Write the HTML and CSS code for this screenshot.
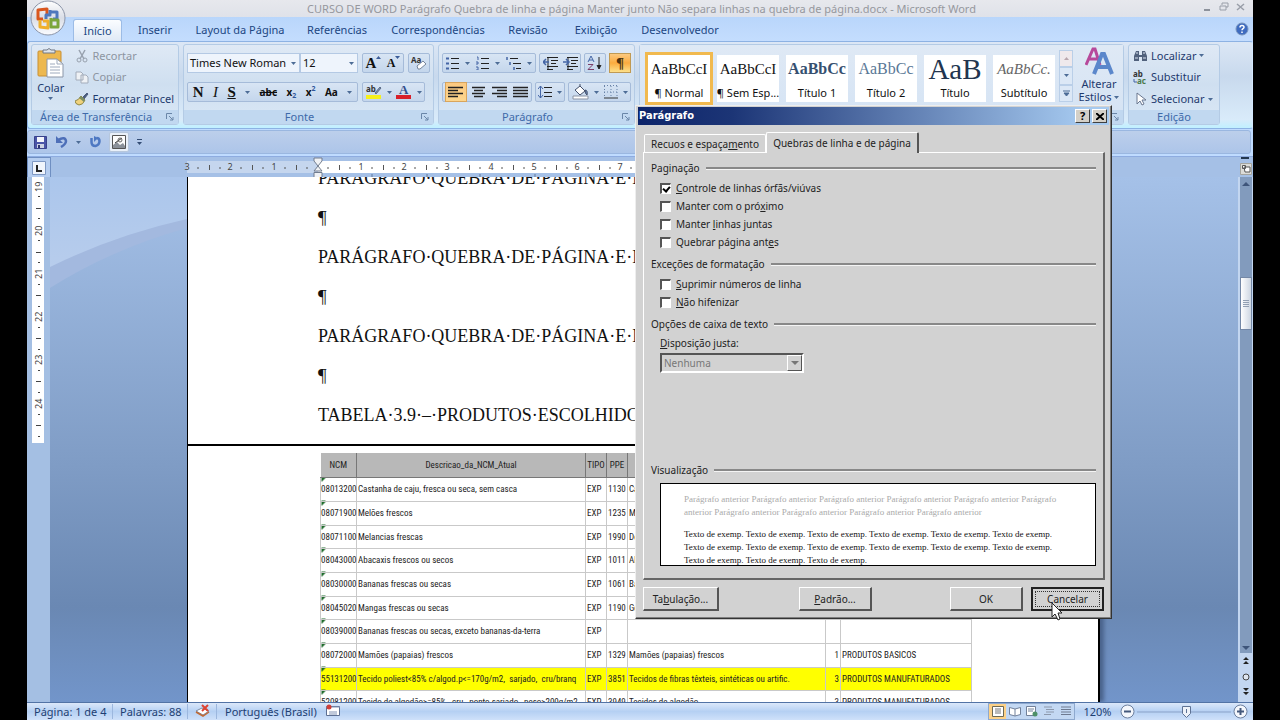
FILE: index.html
```html
<!DOCTYPE html>
<html lang="pt-BR">
<head>
<meta charset="utf-8">
<title>Microsoft Word</title>
<link rel="stylesheet" href="styles.css">
</head>
<body>
<svg class="defs" width="0" height="0" aria-hidden="true">
  <symbol id="launch" viewBox="0 0 8 8"><path d="M0.500 6V.5H6M3 3l4 4M7 4v3H4" fill="none" stroke="#6a86a8"/></symbol>
  <symbol id="caret" viewBox="0 0 5 3"><path d="M0 0h5L2.500 3z" fill="#4d6c96"/></symbol>
</svg>
<div class="app">
  <header class="titlebar">
    <h1 class="title">CURSO DE WORD Parágrafo Quebra de linha e página Manter junto Não separa linhas na quebra de página.docx - Microsoft Word</h1>
    <div class="winbtns">
      <button aria-label="Minimizar"><svg width="10" height="10"><path d="M2 8h6" stroke="#8d929c" stroke-width="2"/></svg></button>
      <button aria-label="Restaurar"><svg width="10" height="10"><path d="M3 3V1h6v4H7M1 4h6v4H1z" stroke="#999ea8" fill="none"/></svg></button>
      <button aria-label="Fechar"><svg width="10" height="10"><path d="M1 2l7 6M8 2L1 8" stroke="#999ea8" stroke-width="1.500"/></svg></button>
    </div>
  </header>
  <button class="orb" aria-label="Botão Office">
    <svg viewBox="0 0 36 36" width="36" height="36">
      <defs><linearGradient id="orbg" x1="0" y1="0" x2="0" y2="1"><stop offset="0" stop-color="#fff"/><stop offset=".5" stop-color="#d9dde6"/><stop offset="1" stop-color="#fbfcff"/></linearGradient></defs>
      <circle cx="18" cy="18" r="17" fill="url(#orbg)" stroke="#8c95a8"/>
      <g fill="none" stroke-width="3" stroke-linejoin="round">
        <path d="M17 15V9L8 10v9h5" stroke="#d9571f"/>
        <path d="M20 10v5h-4v4M20 12h7v7h-4" stroke="#4f78bd"/>
        <path d="M10 20v7l8 1v-7h-5" stroke="#efb02c"/>
        <path d="M21 18v9h7v-7h-6" stroke="#7ba63c"/>
      </g>
    </svg>
  </button>
  <nav class="tabs">
    <button class="tab on">Início</button><button class="tab t2">Inserir</button><button class="tab t3">Layout da Página</button><button class="tab t4">Referências</button><button class="tab t5">Correspondências</button><button class="tab t6">Revisão</button><button class="tab t7">Exibição</button><button class="tab t8">Desenvolvedor</button>
    <button class="help" aria-label="Ajuda"><svg width="14" height="14"><circle cx="7" cy="7" r="6" fill="#3f6cc0" stroke="#7894bd"/><path d="M5 5.500c0-2.600 4-2.600 4-.3 0 1.500-2 1.400-2 3M7 9.500v1.500" stroke="#fff" stroke-width="1.500" fill="none"/></svg></button>
  </nav>

  <div class="ribbon">
    <section class="group g-clip">
      <div class="body clip">
        <button class="big">
          <svg width="27" height="30" viewBox="0 0 27 30"><rect x="1" y="3" width="23" height="25" rx="1" fill="#edb84f" stroke="#c98f32"/><path d="M6 5V2h4q2-3 4 0h4v3z" fill="#dfe4ea" stroke="#6e7785"/><path d="M10 11h10l6 5v13H10z" fill="#fff" stroke="#8b96a8"/><path d="M20 11v5h6M13 16h5M13 19h10M13 22h10M13 25h10" stroke="#9eaabd" fill="none"/></svg>
          <span>Colar</span><svg width="5" height="3"><use href="#caret"/></svg>
        </button>
        <div class="list">
          <button class="row dim"><svg width="14" height="14"><path d="M4 1l5 9M10 1L5 10" stroke="#98a1ae" stroke-width="1.500"/><circle cx="4" cy="11" r="2" fill="none" stroke="#98a1ae"/><circle cx="10" cy="11" r="2" fill="none" stroke="#98a1ae"/></svg>Recortar</button>
          <button class="row dim"><svg width="14" height="14"><path d="M1 2h5l2 2v6H1zM6 5h5l2 2v6H6z" fill="#eef1f5" stroke="#a3acba"/></svg>Copiar</button>
          <button class="row"><svg width="14" height="14"><path d="M8 5l4-4 1 1-4 5z" fill="#4b5c7d" stroke="#4b5c7d"/><path d="M6 4l4 4q-2 5-6 5-4-1-4-4 4-1 6-5z" fill="#f0d27c" stroke="#8f8745"/><path d="M6 4l4 4-1 2-5-4z" fill="#7c8f64"/></svg>Formatar Pincel</button>
        </div>
      </div>
      <h2 class="label">Área de Transferência</h2><svg class="launch" width="8" height="8"><use href="#launch"/></svg>
    </section>

    <section class="group g-font">
      <div class="body lines">
        <div class="line">
          <button class="combo fontname">Times New Roman<svg width="5" height="3"><use href="#caret"/></svg></button><button class="combo fontsize">12<svg width="5" height="3"><use href="#caret"/></svg></button>
          <div class="bar grow"><button class="serif">A<svg class="tri" width="5" height="3"><path d="M0 3h5L2.500 0z" fill="#3a5b98"/></svg></button><button class="serif sm">A<svg class="tri" width="5" height="3"><path d="M0 0h5L2.500 3z" fill="#3a5b98"/></svg></button></div>
          <div class="bar"><button aria-label="Limpar formatação"><svg width="18" height="16"><text x="1" y="8" class="tiny">Aa</text><path d="M7 11l6-5 3 3-6 5H8z" fill="#fff" stroke="#77859a"/></svg></button></div>
        </div>
        <div class="line">
          <div class="bar styles"><button class="serif"><b>N</b></button><button class="serif"><i>I</i></button><button class="serif"><b><u>S</u></b></button><svg width="5" height="3"><use href="#caret"/></svg><button class="strike">abc</button><button class="x">x<sub>2</sub></button><button class="x">x<sup>2</sup></button><button class="x">Aa</button><svg width="5" height="3"><use href="#caret"/></svg></div>
          <div class="bar colors"><button aria-label="Realce"><svg width="18" height="16"><text x="1" y="8" class="tiny">ab</text><path d="M10 9l5-6 1 1-5 6z" fill="#7c8fae" stroke="#5c6d88"/><path d="M1 11h15v4H1z" fill="#f6f01b"/></svg></button><svg width="5" height="3"><use href="#caret"/></svg><button aria-label="Cor da fonte"><svg width="18" height="16"><text x="4" y="10" class="biga">A</text><path d="M1 11h15v4H1z" fill="#d8202a"/></svg></button><svg width="5" height="3"><use href="#caret"/></svg></div>
        </div>
      </div>
      <h2 class="label">Fonte</h2><svg class="launch" width="8" height="8"><use href="#launch"/></svg>
    </section>

    <section class="group g-para">
      <div class="body lines">
        <div class="line">
          <div class="bar lists">
            <button aria-label="Marcadores"><svg width="14" height="14"><path d="M5 2.500h8M5 7.500h8M5 12.500h8" stroke="#222"/><path d="M0 2.500h3M0 7.500h3M0 12.500h3" stroke="#4465a5" stroke-width="2"/></svg></button><svg width="5" height="3"><use href="#caret"/></svg>
            <button aria-label="Numeração"><svg width="14" height="14"><path d="M5 2.500h8M5 7.500h8M5 12.500h8" stroke="#222"/><path d="M1 1h1v3M0 6h2v2H0M0 11h2v3H0" fill="none" stroke="#4465a5"/></svg></button><svg width="5" height="3"><use href="#caret"/></svg>
            <button aria-label="Vários níveis"><svg width="16" height="14"><path d="M4 2.500h8M7 7.500h8M10 12.500h5" stroke="#222"/><path d="M1 1v3M4 6v3M8 11v3" stroke="#4465a5" stroke-width="1.500"/></svg></button><svg width="5" height="3"><use href="#caret"/></svg>
          </div>
          <div class="bar two">
            <button aria-label="Diminuir recuo"><svg width="15" height="14"><path d="M4 1.500h11M8 4.500h7M8 7.500h5M4 10.500h11M4 13.500h6M5 1v13" stroke="#222"/><path d="M0 6h6M3 3L0 6l3 3" stroke="#4465a5" stroke-width="1.500" fill="none"/></svg></button>
            <button aria-label="Aumentar recuo"><svg width="15" height="14"><path d="M4 1.500h11M8 4.500h7M8 7.500h5M4 10.500h11M4 13.500h6M5 1v13" stroke="#222"/><path d="M0 6h6M3 3l3 3-3 3" stroke="#4465a5" stroke-width="1.500" fill="none"/></svg></button>
          </div>
          <div class="bar"><button aria-label="Classificar"><svg width="16" height="16"><path d="M1 7l3-6 3 6M2 5h4" stroke="#4465a5" fill="none"/><path d="M1 9.500h5l-5 5h6" stroke="#7c3f68" fill="none"/><path d="M12 2v11M10 10l2 4 2-4" stroke="#222" fill="#222"/></svg></button></div>
          <button class="pil">¶</button>
        </div>
        <div class="line">
          <div class="bar align">
            <button class="sel" aria-label="Esquerda"><svg width="15" height="13"><path d="M0 1.500h15M0 4.500h10M0 7.500h15M0 10.500h10" stroke="#222" stroke-width="1.500"/></svg></button>
            <button aria-label="Centro"><svg width="15" height="13"><path d="M1 1.500h13M3 4.500h9M1 7.500h13M3 10.500h9" stroke="#222" stroke-width="1.500"/></svg></button>
            <button aria-label="Direita"><svg width="15" height="13"><path d="M0 1.500h15M5 4.500h10M0 7.500h15M5 10.500h10" stroke="#222" stroke-width="1.500"/></svg></button>
            <button aria-label="Justificar"><svg width="15" height="13"><path d="M0 1.500h15M0 4.500h15M0 7.500h15M0 10.500h15" stroke="#222" stroke-width="1.500"/></svg></button>
          </div>
          <div class="bar spacing"><button aria-label="Espaçamento"><svg width="15" height="14"><path d="M6 2.500h8M6 7.500h8M6 11.500h8" stroke="#222"/><path d="M2.500 1v12M0 4l2.500-3L5 4M0 10l2.500 3L5 10" stroke="#4465a5" fill="none"/></svg></button><svg width="5" height="3"><use href="#caret"/></svg></div>
          <div class="bar colors">
            <button aria-label="Sombreamento"><svg width="17" height="16"><path d="M3 6l5-4 5 5-5 4z" fill="#fff" stroke="#44506a"/><path d="M8 2V0M13 6q3 0 2 5-2-1-2-5" stroke="#44506a" fill="#6b85b5"/><path d="M1 12h15v3H1z" fill="#fff" stroke="#8a93a3"/></svg></button><svg width="5" height="3"><use href="#caret"/></svg>
            <button aria-label="Bordas"><svg width="14" height="14"><path d="M.5 1v12M7 1v12M13 1v12M0 .5h14M0 7h14" stroke="#6982a7" stroke-dasharray="1 2"/><path d="M0 13h14" stroke="#333"/></svg></button><svg width="5" height="3"><use href="#caret"/></svg>
          </div>
        </div>
      </div>
      <h2 class="label">Parágrafo</h2><svg class="launch" width="8" height="8"><use href="#launch"/></svg>
    </section>

    <section class="group g-style">
      <div class="body gallery">
        <button class="style cur"><span class="smp">AaBbCcI</span><span>¶ Normal</span></button>
        <button class="style"><span class="smp">AaBbCcI</span><span>¶ Sem Esp...</span></button>
        <button class="style"><span class="smp h1s">AaBbCc</span><span>Título 1</span></button>
        <button class="style"><span class="smp h2s">AaBbCc</span><span>Título 2</span></button>
        <button class="style"><span class="smp tts">AaB</span><span>Título</span></button>
        <button class="style"><span class="smp sts">AaBbCc.</span><span>Subtítulo</span></button>
        <div class="gscroll"><button aria-label="Acima" class="up"><svg width="5" height="3"><path d="M0 3h5L2.500 0z" fill="#b9a7ae"/></svg></button><button aria-label="Abaixo"><svg width="5" height="3"><use href="#caret"/></svg></button><button aria-label="Mais"><svg width="7" height="7"><path d="M0 1h7M1 3h5L3.500 6z" fill="#4d6c96" stroke="#4d6c96"/></svg></button></div>
        <button class="big alt">
          <svg width="29" height="30" viewBox="0 0 29 30"><path d="M1 18L8 2h2l5 16M4 12h9" stroke="#b7499b" stroke-width="3" fill="none"/><path d="M9 27l8-20h2l8 20M12 20h12" stroke="#5b87cb" stroke-width="4" fill="none"/></svg>
          <span>Alterar</span><span>Estilos <svg width="5" height="3"><use href="#caret"/></svg></span>
        </button>
      </div>
      <div class="label"></div><svg class="launch" width="8" height="8"><use href="#launch"/></svg>
    </section>

    <section class="group g-edit">
      <div class="body list">
        <button class="row"><svg width="15" height="13"><path d="M1 12V7l2-5h3v4h3V2h3l2 5v5H9V8H6v4z" fill="#51617c"/><path d="M2 9h3M10 9h3M3 4h2M10 4h2" stroke="#dce5f2"/></svg>Localizar<svg width="5" height="3"><use href="#caret"/></svg></button>
        <button class="row"><svg width="15" height="14"><text x="0" y="7" class="tiny">ab</text><text x="4" y="14" class="tiny grn">ac</text><path d="M1 9v3h3" stroke="#4465a5" fill="none"/></svg>Substituir</button>
        <button class="row"><svg width="15" height="14"><path d="M4 1v11l3-3 2 4 2-1-2-4h4z" fill="#fff" stroke="#6b7890"/></svg>Selecionar<svg width="5" height="3"><use href="#caret"/></svg></button>
      </div>
      <h2 class="label">Edição</h2>
    </section>
  </div>

  <div class="qat">
    <button aria-label="Salvar"><svg width="13" height="13"><path d="M.5.5h12v12H.5z" fill="#4a55a8" stroke="#39428c"/><path d="M3 1h7v5H3z" fill="#f3f5fb"/><path d="M3 8h7v4H3z" fill="#cdd3e4"/><path d="M4 9h2v3H4z" fill="#2d3572"/></svg></button>
    <button aria-label="Desfazer"><svg width="13" height="12"><path d="M3 4q7-4 8 1 0 3-5 6" stroke="#4e6fb8" stroke-width="2.500" fill="none"/><path d="M1 0v7h7z" fill="#4e6fb8"/></svg></button>
    <svg width="5" height="3"><use href="#caret"/></svg>
    <button aria-label="Refazer"><svg width="12" height="12"><path d="M2.500 2v4q0 4 4 4 4-1 4-5 0-3-3-3" stroke="#4e78c2" stroke-width="2.500" fill="none"/><path d="M5 0v6l4-4z" fill="#4e78c2"/></svg></button>
    <button class="picbtn" aria-label="Imagem"><svg width="14" height="14"><path d="M.5.5h13v13H.5z" fill="#fdfdfd" stroke="#555"/><path d="M1 10l4-3 3 3 3-2 2 3v2H1z" fill="#8a9099"/><path d="M3 8l7-5" stroke="#333"/><circle cx="8" cy="5" r="2" fill="none" stroke="#666"/></svg></button>
    <button aria-label="Personalizar"><svg width="5" height="6"><path d="M0 .5h5" stroke="#334c74"/><path d="M0 3h5L2.500 6z" fill="#334c74"/></svg></button>
  </div>

  <div class="rulerrow">
    <button class="corner" aria-label="Tabulação"><svg width="14" height="14"><path d="M.5.5h13v13H.5z" fill="#f0f5fc" stroke="#7e98c3"/><path d="M5 4v6h5" stroke="#222" stroke-width="2" fill="none"/></svg></button>
    <svg class="hruler" height="22" width="914">
      <path d="M0 4h131v12H0z" fill="#c5d6ee"/><path d="M131 4h650v12H131z" fill="#fff"/>
      <g class="rn"><text x="0" y="13">3</text><text x="43" y="13">2</text><text x="87" y="13">1</text><text x="174" y="13">1</text><text x="217" y="13">2</text><text x="260" y="13">3</text><text x="304" y="13">4</text><text x="347" y="13">5</text><text x="390" y="13">6</text><text x="433" y="13">7</text></g>
      <path d="M22.500 8v5M65.500 8v5M109.500 8v5M152.500 8v5M196.500 8v5M239.500 8v5M282.500 8v5M326.500 8v5M369.500 8v5M412.500 8v5" stroke="#555"/>
      <path d="M11 10v2M33 10v2M54 10v2M76 10v2M98 10v2M120 10v2M141 10v2M163 10v2M185 10v2M207 10v2M228 10v2M250 10v2M271 10v2M293 10v2M315 10v2M337 10v2M358 10v2M380 10v2M401 10v2M423 10v2M444 10v2" stroke="#555"/>
      <path d="M185 17v3M240 17v3M293 17v3M348 17v3M402 17v3" stroke="#60789b"/>
      <path d="M127 1h8v3l-4 5-4-5zM131 9l4 5H127zM127 15.500h8v6h-8z" fill="#f0f2f5" stroke="#727d8f"/>
    </svg>
    <span class="splitter"></span>
  </div>

  <main class="work">
    <div class="vruler">
      <svg width="12" height="266">
        <g class="rn"><text transform="translate(10 15) rotate(-90)">19</text><text transform="translate(10 59) rotate(-90)">20</text><text transform="translate(10 102) rotate(-90)">21</text><text transform="translate(10 145) rotate(-90)">22</text><text transform="translate(10 188) rotate(-90)">23</text><text transform="translate(10 232) rotate(-90)">24</text></g>
        <path d="M4 31.500h5M4 75.500h5M4 118.500h5M4 161.500h5M4 204.500h5M4 248.500h5" stroke="#444"/>
        <path d="M6 19.500h2M6 41.500h2M6 63.500h2M6 85.500h2M6 107.500h2M6 129.500h2M6 150.500h2M6 172.500h2M6 193.500h2M6 215.500h2M6 237.500h2M6 259.500h2" stroke="#444"/>
      </svg>
    </div>
    <div class="canvas">
      <svg class="wave" viewBox="0 0 137 120" width="137" height="120"><defs><linearGradient id="wv" x1="0" y1="0" x2="0" y2="1"><stop offset="0" stop-color="#abc6ec"/><stop offset="1" stop-color="#b8cdec"/></linearGradient></defs><path d="M0 0h137v43Q62 64 0 95z" fill="url(#wv)"/><path d="M0 90Q65 58 137 42v9Q62 72 0 111z" fill="#a3b9df"/></svg>
      <article class="page">
        <div class="text">
          <p>PARÁGRAFO·QUEBRA·DE·PÁGINA·E·MANTER</p><p class="blank">¶</p>
          <p>PARÁGRAFO·QUEBRA·DE·PÁGINA·E·MANTER</p><p class="blank">¶</p>
          <p>PARÁGRAFO·QUEBRA·DE·PÁGINA·E·MANTER</p><p class="blank">¶</p>
          <p>TABELA·3.9·–·PRODUTOS·ESCOLHIDOS</p>
        </div>
        <div class="sheet">
          <table>
            <colgroup><col class="c1"><col class="c2"><col class="c3"><col class="c3"><col class="c5"><col class="c6"><col class="c7"></colgroup>
            <thead><tr><th>NCM</th><th>Descricao_da_NCM_Atual</th><th>TIPO</th><th>PPE</th><th></th><th></th><th></th></tr></thead>
            <tbody>
              <tr><td>08013200</td><td>Castanha de caju, fresca ou seca, sem casca</td><td>EXP</td><td>1130</td><td>Ca</td><td></td><td></td></tr>
              <tr><td>08071900</td><td>Melões frescos</td><td>EXP</td><td>1235</td><td>M</td><td></td><td></td></tr>
              <tr><td>08071100</td><td>Melancias frescas</td><td>EXP</td><td>1990</td><td>De</td><td></td><td></td></tr>
              <tr><td>08043000</td><td>Abacaxis frescos ou secos</td><td>EXP</td><td>1011</td><td>Al</td><td></td><td></td></tr>
              <tr><td>08030000</td><td>Bananas frescas ou secas</td><td>EXP</td><td>1061</td><td>Ba</td><td></td><td></td></tr>
              <tr><td>08045020</td><td>Mangas frescas ou secas</td><td>EXP</td><td>1190</td><td>Go</td><td></td><td></td></tr>
              <tr><td>08039000</td><td>Bananas frescas ou secas, exceto bananas-da-terra</td><td>EXP</td><td></td><td></td><td></td><td></td></tr>
              <tr><td>08072000</td><td>Mamões (papaias) frescos</td><td>EXP</td><td>1329</td><td>Mamões (papaias) frescos</td><td class="r">1</td><td>PRODUTOS BASICOS</td></tr>
              <tr class="hl"><td>55131200</td><td>Tecido poliest&lt;85% c/algod.p&lt;=170g/m2, &nbsp;sarjado, &nbsp;cru/branq</td><td>EXP</td><td>3851</td><td>Tecidos de fibras têxteis, sintéticas ou artific.</td><td class="r">3</td><td>PRODUTOS MANUFATURADOS</td></tr>
              <tr><td>52081200</td><td>Tecido de algodão&gt;=85%, &nbsp;cru, &nbsp;ponto sarjado, &nbsp;peso&gt;200g/m2</td><td>EXP</td><td>3949</td><td>Tecidos de algodão</td><td class="r">3</td><td>PRODUTOS MANUFATURADOS</td></tr>
            </tbody>
          </table>
        </div>
      </article>
    </div>
    <div class="scroll">
      <button class="rulerbtn" aria-label="Régua"><svg width="12" height="12"><path d="M.5.5h11v11H.5z" fill="#dcdcd8" stroke="#a5a59f"/><path d="M2.500 2.500h3v3h-3zM4 4h6v5H5z" fill="#fff" stroke="#555"/></svg></button>
      <div class="track"><span class="arr upa"></span><span class="thumb"></span><span class="arr dna"></span></div>
      <button aria-label="Página anterior"><svg width="8" height="9"><path d="M4 0l3 3H1zM4 4l3 3H1z" fill="#222"/></svg></button>
      <button aria-label="Procurar"><svg width="8" height="8"><circle cx="4" cy="4" r="3" fill="#dfe6f0" stroke="#444"/></svg></button>
      <button aria-label="Próxima página"><svg width="8" height="9"><path d="M4 8l3-3H1zM4 4l3-3H1z" fill="#222"/></svg></button>
    </div>
  </main>

  <footer class="status">
    <span class="cell s1">Página: 1 de 4</span><span class="cell s2">Palavras: 88</span>
    <span class="cell s3"><svg width="16" height="14"><path d="M1 7l6-3 7 3-6 4z" fill="#fff" stroke="#7d8ba3"/><path d="M1 8l7 4 6-4" fill="none" stroke="#c06a35" stroke-width="1.500"/><path d="M7 1l6 6M13 1L7 7" stroke="#dd4432" stroke-width="2"/></svg></span>
    <span class="cell s4">Português (Brasil)</span>
    <span class="cell s5"><svg width="14" height="12"><path d="M.5 2.500h13v9H.5z" fill="#fff" stroke="#5c6f92"/><path d="M0 3h14M3 8h8M3 10h8" stroke="#8093b5"/><circle cx="3" cy="3" r="2.500" fill="#cf3f38"/></svg></span>
    <div class="views">
      <button class="sel" aria-label="Layout de impressão"><svg width="12" height="11"><path d="M.5.5h11v10H.5z" fill="#fff" stroke="#6d6a55"/><path d="M3 3h6M3 5h6M3 7h6" stroke="#777"/></svg></button>
      <button aria-label="Leitura"><svg width="12" height="11"><path d="M.5 1.500L6 3l5.500-1.500v7L6 10 .5 8.500zM6 3v7" fill="#fff" stroke="#71809a"/></svg></button>
      <button aria-label="Web"><svg width="12" height="11"><path d="M.5.500h9v9h-9zM2 3h6M2 5h5" fill="#fff" stroke="#71809a"/><circle cx="9" cy="8" r="2.500" fill="#4e9068"/></svg></button>
      <button aria-label="Tópicos"><svg width="12" height="11"><path d="M1 1h8M3 3.500h8M3 6h8M1 8.500h7" stroke="#8c98ac"/></svg></button>
      <button aria-label="Rascunho"><svg width="12" height="11"><path d="M1 1h10M1 3.500h10M1 6h10M1 8.500h10" stroke="#6e7a90"/></svg></button>
    </div>
    <span class="pct">120%</span>
    <svg class="rnd" width="15" height="15"><circle cx="7.500" cy="7.500" r="6.500" fill="#f4f7fc" stroke="#6c7f9e"/><path d="M4 7.500h7" stroke="#44597c" stroke-width="2"/></svg>
    <svg class="zoombar" height="14" width="94"><path d="M0 7h94" stroke="#8ba3c8"/><path d="M45.500 1.500h8v7l-4 4-4-4z" fill="#edf2f9" stroke="#5d7295"/><path d="M49.500 4v4" stroke="#5d7295"/></svg>
    <svg class="rnd" width="15" height="15"><circle cx="7.500" cy="7.500" r="6.500" fill="#f4f7fc" stroke="#6c7f9e"/><path d="M4 7.500h7M7.500 4v7" stroke="#44597c" stroke-width="2"/></svg>
  </footer>

  <div class="dialog" role="dialog" aria-label="Parágrafo">
    <div class="dtitle"><h2>Parágrafo</h2><button class="cap">?</button><button class="cap" aria-label="Fechar"><svg width="8" height="7"><path d="M0 0l8 7M8 0L0 7" stroke="#000" stroke-width="2"/></svg></button></div>
    <div class="dtabs"><button class="dtab">Recuos e espaça<u>m</u>ento</button><button class="dtab act">Quebras de linha e de página</button></div>
    <div class="panel">
      <h3 class="sec">Paginação</h3>
      <div class="checks">
        <label><input type="checkbox" checked><span><u>C</u>ontrole de linhas órfãs/viúvas</span></label>
        <label><input type="checkbox"><span>Manter com o pró<u>x</u>imo</span></label>
        <label><input type="checkbox"><span>Manter <u>l</u>inhas juntas</span></label>
        <label><input type="checkbox"><span>Quebrar página ant<u>e</u>s</span></label>
      </div>
      <h3 class="sec">Exceções de formatação</h3>
      <div class="checks">
        <label><input type="checkbox"><span><u>S</u>uprimir números de linha</span></label>
        <label><input type="checkbox"><span><u>N</u>ão hifenizar</span></label>
      </div>
      <h3 class="sec">Opções de caixa de texto</h3>
      <label class="selabel" for="fit"><u>D</u>isposição justa:</label>
      <div class="selwrap"><select id="fit" disabled><option>Nenhuma</option></select><span class="selarrow"></span></div>
      <div class="fill"></div>
      <h3 class="sec">Visualização</h3>
      <div class="preview">
        <p class="prev">Parágrafo anterior Parágrafo anterior Parágrafo anterior Parágrafo anterior Parágrafo anterior Parágrafo<br>anterior Parágrafo anterior Parágrafo anterior Parágrafo anterior Parágrafo anterior</p>
        <p>Texto de exemp. Texto de exemp. Texto de exemp. Texto de exemp. Texto de exemp. Texto de exemp.<br>Texto de exemp. Texto de exemp. Texto de exemp. Texto de exemp. Texto de exemp. Texto de exemp.<br>Texto de exemp. Texto de exemp. Texto de exemp.</p>
      </div>
    </div>
    <div class="dbtns"><button class="btn b1">Ta<u>b</u>ulação...</button><button class="btn b2"><u>P</u>adrão...</button><button class="btn b3">OK</button><button class="btn b4"><span>Cancelar</span></button></div>
  </div>
  <svg class="pointer" width="13" height="19"><path d="M1 1v14l3-3 3 6 2-1-2-6h4z" fill="#fff" stroke="#222"/></svg>
</div>
</body>
</html>
```
FILE: styles.css
```css
* { box-sizing: border-box; }
html, body { height: 100%; }
body { margin: 0; padding: 0 27px; background: #000; overflow: hidden; font: 11px/14px "Noto Sans", "Open Sans", sans-serif; color: #1e3a6e; }
button { font: inherit; color: inherit; background: none; border: 0; padding: 0; margin: 0; display: inline-flex; align-items: center; justify-content: center; white-space: nowrap; }
h1, h2, h3, p { margin: 0; font: inherit; }
svg { flex: none; display: block; }
.defs { position: absolute; }
.app { position: relative; height: 100%; display: flex; flex-direction: column; background: #bfdbff; overflow: hidden; }

.titlebar { height: 17px; flex: none; display: flex; align-items: center; background: linear-gradient(#e7e8ed, #dfe2e9); }
.title { flex: 1; text-align: center; padding-left: 54px; color: #96989e; white-space: nowrap; }
.winbtns { display: flex; gap: 7px; width: 51px; align-self: flex-start; padding-top: 2px; }
.orb { position: absolute; left: 3px; top: 0; z-index: 3; }

.tabs { height: 24px; flex: none; display: flex; align-items: stretch; background: linear-gradient(#b9d6fb, #c4ddfe); padding-left: 46px; color: #204682; }
.tab { padding-top: 2px; width: 76px; }
.tab.on { width: 49px; margin-right: 20px; margin-top: 2px; padding: 0; border: 1px solid #9cbce6; border-bottom: 0; border-radius: 3px 3px 0 0; background: linear-gradient(#fbfdff, #dfe9f6); }
.t2 { width: 26px; min-width: 26px; }
.t3 { width: 144px; }
.t4 { width: 50px; }
.t5 { width: 152px; }
.t6 { width: 28px; }
.t7 { width: 108px; }
.t8 { width: 60px; }
.help { margin-left: auto; margin-right: 4px; }

.ribbon { height: 88px; flex: none; display: flex; gap: 4px; padding: 2px 3px 3px; background: linear-gradient(#dce7f5, #c8d9ed 40%, #d9ebfa 90%, #c0f0ff); border: 1px solid #8db2e3; border-right-color: #d5e9ff; border-radius: 3px; font-size: 10px; }
.group { position: relative; display: flex; flex-direction: column; border: 1px solid #b4cbe5; border-radius: 3px; background: linear-gradient(#dfe9f5, #cfdff0 50%, #dae8f6); flex: none; }
.body { flex: 1; min-height: 0; }
.label { height: 14px; line-height: 13px; text-align: center; background: #c1d8f0; color: #3e6aaa; font-size: 11px; padding-right: 18px; }
.launch { position: absolute; right: 4px; bottom: 3px; }
.g-clip { width: 148px; }
.g-clip .list { margin-left: 2px; }
.g-font { width: 251px; }
.g-para { width: 197px; }
.g-style { width: 485px; }
.g-edit { width: 92px; }
.g-edit .label { padding: 0; }
.clip { display: flex; }
.big { flex-direction: column; width: 46px; gap: 4px; font-size: 11px; line-height: 11px; justify-content: flex-start; padding-top: 3px; }
.list { display: flex; flex-direction: column; justify-content: space-around; align-items: flex-start; padding: 0 4px; }
.row { gap: 3px; height: 20px; font-size: 11px; }
.dim { color: #8d95a1; }
.lines { padding: 8px 3px; display: flex; flex-direction: column; justify-content: space-between; }
.line { display: flex; height: 20px; gap: 4px; }
.combo { background: #eef4fc; border: 1px solid #b4c9e4; color: #111; font-size: 11px; justify-content: space-between; padding: 0 3px 0 2px; }
.fontname { width: 113px; }
.fontsize { width: 58px; margin-left: -4px; }
.bar { display: flex; align-items: center; justify-content: space-around; border: 1px solid #a5bbd9; border-radius: 2px; background: linear-gradient(#d8e5f4, #c4d6ec); min-width: 22px; color: #111; }
.bar.grow { width: 42px; }
.serif { font: 15px/16px "Liberation Serif", serif; }
.grow .serif { font-weight: bold; }
.tri { align-self: flex-start; margin-top: 1px; }
.grow .sm { font-size: 12px; }
.styles { width: 171px; }
.colors { width: 63px; }
.strike { text-decoration: line-through; font-weight: bold; font-size: 10px; }
.x { font-weight: bold; }
.x sub, .x sup { font-size: 7px; line-height: 7px; color: #2f569b; }
.x sup { align-self: flex-start; }
.x sub { align-self: flex-end; }
.tiny { font: bold 8px "Noto Sans", sans-serif; fill: #333; }
.grn { fill: #4a7a4a; }
.biga { font: bold 13px "Liberation Serif", serif; fill: #34508c; }
.lists { width: 94px; }
.two { width: 42px; }
.spacing { width: 31px; }
.g-para .line { gap: 3px; }
.pil { width: 22px; border: 1px solid #c09a54; background: linear-gradient(#fbc980, #fbab3f 50%, #fde08a); font: bold 15px "Liberation Serif", serif; color: #4b3210; }
.align { width: 90px; }
.align .sel { background: linear-gradient(#fbc980, #fdd68d); outline: 1px solid #d9a55c; height: 18px; width: 20px; }
.gallery { display: flex; gap: 7px; padding: 10px 1px 0 8px; background: linear-gradient(#dfe9f5, #d6e4f4); }
.style { width: 62px; height: 47px; background: #fff; flex-direction: column; flex: none; overflow: hidden; color: #111; font-size: 11px; justify-content: space-between; padding: 4px 0 2px; }
.cur { outline: 3px solid #f1b94e; }
.smp { font: 15px/20px "Liberation Serif", serif; }
.h1s { font-weight: bold; font-size: 16px; color: #365070; }
.h2s { color: #5a7896; font-size: 16px; }
.tts { font-size: 29px; color: #22354f; }
.sts { font-style: italic; color: #666; }
.gscroll { width: 14px; height: 52px; margin: -5px 0 0 -3px; display: flex; flex-direction: column; flex: none; }
.gscroll button { flex: 1; border: 1px solid #bacfe8; background: #dce8f6; }
.gscroll .up { background: #efe9ec; }
.alt { width: 48px; margin: -8px 0 0 -5px; gap: 1px; flex: none; padding: 0; }
.alt span { display: flex; align-items: center; gap: 3px; line-height: 12px; }

.qat { height: 24px; flex: none; margin: 1px 2px 2px 0; display: flex; align-items: center; gap: 8px; padding-left: 6px; border: 1px solid #9ab7e0; border-radius: 3px; background: linear-gradient(#bccfeb, #adc5e9); }
.picbtn { width: 20px; height: 20px; border: 1px solid #b7c7dc; background: #e9f0f9; border-radius: 2px; }

.rulerrow { height: 21px; flex: none; display: flex; background: #a5c0e6; border-top: 1px solid #8eace0; }
.corner { width: 24px; height: 22px; border: 1px solid #6f8fc2; background: #b6cef0; }
.hruler { margin-left: 136px; overflow: visible; }
.rn { font: 9px "Noto Sans", sans-serif; fill: #444; }
.hruler .rn { text-anchor: middle; }
.splitter { margin-left: auto; margin-right: 4px; width: 8px; height: 2px; background: #23374f; }

.work { flex: 1; min-height: 0; display: flex; }
.vruler { width: 23px; background: #a4bfe3; padding-left: 5px; flex: none; }
.vruler svg { background: #fff; }
.canvas { flex: 1; min-width: 0; position: relative; display: flex; padding: 0 138px 0 137px; overflow: hidden; background: linear-gradient(#a5c1e8, #7f9cc5 55%, #6a88b3 82%, #7295ca); }
.wave { position: absolute; left: 0; top: 0; }
.page { position: relative; flex: 1; min-width: 0; background: #fff; border: solid #000; border-width: 0 2px 0 1px; box-shadow: 4px 0 4px #4a638c; overflow: hidden; white-space: nowrap; color: #111; }
.text { height: 269px; border-bottom: 2px solid #000; padding-left: 130px; font: 18px/39px "Liberation Serif", serif; overflow: hidden; }
.text p:first-child { margin-top: -18px; }
.text .blank { line-height: 40px; font-size: 19px; }
.sheet { padding: 7px 0 0 132px; }
table { border-collapse: collapse; table-layout: fixed; width: 651px; font: 9px/12px "Roboto Condensed", "Liberation Sans Narrow", "Noto Sans", sans-serif; color: #222; }
.c1 { width: 36px; } .c2 { width: 229px; } .c3 { width: 21px; } .c5 { width: 198px; } .c6 { width: 15px; } .c7 { width: 131px; }
th { height: 24px; padding: 0; background: #b8b8b8; border: 1px solid #777; border-width: 0 1px 1px 0; font-weight: normal; color: #222; }
td { height: 24px; padding: 0 1px; border: 1px solid #c9c9c9; }
tbody tr:nth-child(3n) td { height: 23px; }
td:first-child { background: linear-gradient(135deg, #1f6b2c 3px, transparent 3px); padding: 0; }
.hl { background: #ff0; }
.r { text-align: right; }

.scroll { width: 15px; flex: none; background: #c3d6f0; display: flex; flex-direction: column; align-items: center; gap: 2px; padding-bottom: 4px; }
.scroll button { height: 13px; }
.scroll .rulerbtn { margin-top: -15px; }
.track { flex: 1; width: 12px; background: #829bbd; display: flex; flex-direction: column; align-items: center; }
.arr { border: solid transparent; border-width: 0 4px; }
.upa { border-bottom: 4px solid #3e557a; margin-top: 5px; }
.dna { border-top: 4px solid #3e557a; margin: auto 0 3px; }
.thumb { width: 12px; height: 53px; margin-top: 91px; border: 1px solid #7488a6; background: repeating-linear-gradient(#93a0b3 0 1px, transparent 1px 2px) center / 6px 7px no-repeat, linear-gradient(90deg, #fff, #cdd6e2); }

.status { height: 18px; flex: none; display: flex; align-items: center; border-top: 1px solid #5273a5; background: linear-gradient(#dbe8fa, #b5d0f3 50%, #cfe1fa); color: #1e3f73; }
.cell { padding: 0 7px; border-right: 1px solid #9cb7de; height: 15px; line-height: 15px; white-space: nowrap; }
.s1 { width: 86px; } .s2 { width: 75px; } .s3 { width: 29px; } .s4 { width: 102px; border: 0; } .s5 { border: 0; }
.s4 { padding: 0 0 0 8px; }
.views { margin-left: auto; display: flex; border: 1px solid #8ea9cf; background: #c3d8f3; height: 17px; }
.views button { width: 17px; }
.views .sel { background: #fdd187; }
.pct { width: 45px; text-align: center; }
.zoombar { margin: 0 2px; }
.status .rnd:last-child { margin-right: 5px; }

.dialog { position: absolute; left: 608px; top: 105px; width: 477px; z-index: 4; padding: 1px 2px 7px; background: #d2d2d2; border: 1px solid; border-color: #eee #333 #333 #eee; box-shadow: inset -1px -1px #808080; color: #222; font: 10px/14px "Noto Sans", sans-serif; }
.dtitle { height: 18px; display: flex; align-items: center; gap: 2px; padding: 0 2px 0 1px; color: #fff; background: linear-gradient(90deg, #0d246a, #1c3576 20%, #a6caf0 95%); }
.dtitle h2 { flex: 1; font: bold 11px/16px "DejaVu Sans Condensed", "Noto Sans", sans-serif; }
.cap { width: 15px; height: 14px; background: #d4d0c8; color: #000; font-weight: bold; font-size: 11px; border: 1px solid; border-color: #fff #404040 #404040 #fff; }
.dtabs { display: flex; align-items: flex-end; padding: 7px 0 0 6px; }
.dtab { width: 122px; height: 18px; border: 1px solid #fff; border-bottom: 0; border-radius: 2px 2px 0 0; }
.dtab.act { width: 153px; height: 21px; border-right: 2px solid #555; margin-bottom: -1px; background: #d2d2d2; z-index: 1; }
.panel { margin: 0 4px 0 5px; height: 428px; border: solid; border-width: 1px 2px 2px 1px; border-color: #fff #666 #666 #fff; padding: 8px 7px 12px 7px; display: flex; flex-direction: column; }
.sec { display: flex; align-items: center; gap: 6px; height: 14px; flex: none; }
.sec::after { content: ""; flex: 1; height: 2px; background: #888; border-bottom: 1px solid #f4f4f4; }
.checks { padding: 4px 0 5px 9px; }
.checks label { display: flex; align-items: center; height: 18px; gap: 5px; }
.checks + .sec { margin-top: 1px; }
input { appearance: none; margin: 0; width: 11px; height: 11px; background: #fff; border: solid; border-width: 2px 1px 1px 2px; border-color: #555 #fff #fff #555; position: relative; }
input:checked::after { content: ""; position: absolute; left: 2px; top: 0; width: 3px; height: 5px; border: solid #000; border-width: 0 2px 2px 0; transform: rotate(40deg); }
.selabel { margin: 5px 0 3px 9px; }
.selwrap { position: relative; width: 144px; height: 20px; margin-left: 9px; }
select { appearance: none; width: 100%; height: 100%; font: inherit; color: #777; opacity: 1; background: #d2d2d2; border: 2px solid; border-color: #555 #fff #fff #555; border-radius: 0; padding: 0 2px; }
.selarrow { position: absolute; right: 2px; top: 2px; width: 15px; height: 16px; border: 1px solid; border-color: #fff #555 #555 #fff; display: grid; place-items: center; }
.selarrow::after { content: ""; border: solid transparent; border-width: 4px 4px 0; border-top-color: #777; }
.fill { flex: 1; }
.preview { margin: 6px 0 0 9px; height: 83px; flex: none; border: 1px solid #000; background: #fff; overflow: hidden; padding: 9px 0 0 23px; font: 9px/13px "Liberation Serif", serif; color: #111; white-space: nowrap; }
.preview p + p { margin-top: 9px; }
.preview .prev { color: #aaa; }
.dbtns { display: flex; padding: 7px 5px 0 5px; }
.btn { height: 24px; border: solid; border-width: 1px 2px 2px 1px; border-color: #fff #555 #555 #fff; }
.b1 { width: 76px; } .b2 { width: 73px; margin-left: 80px; } .b3 { width: 73px; margin-left: auto; } .b4 { width: 73px; margin-left: 8px; border: 2px solid #222; padding: 2px; }
.b4 span { border: 1px dotted #333; flex: 1; line-height: 14px; }
.pointer { position: absolute; left: 1024px; top: 602px; z-index: 5; }
```
